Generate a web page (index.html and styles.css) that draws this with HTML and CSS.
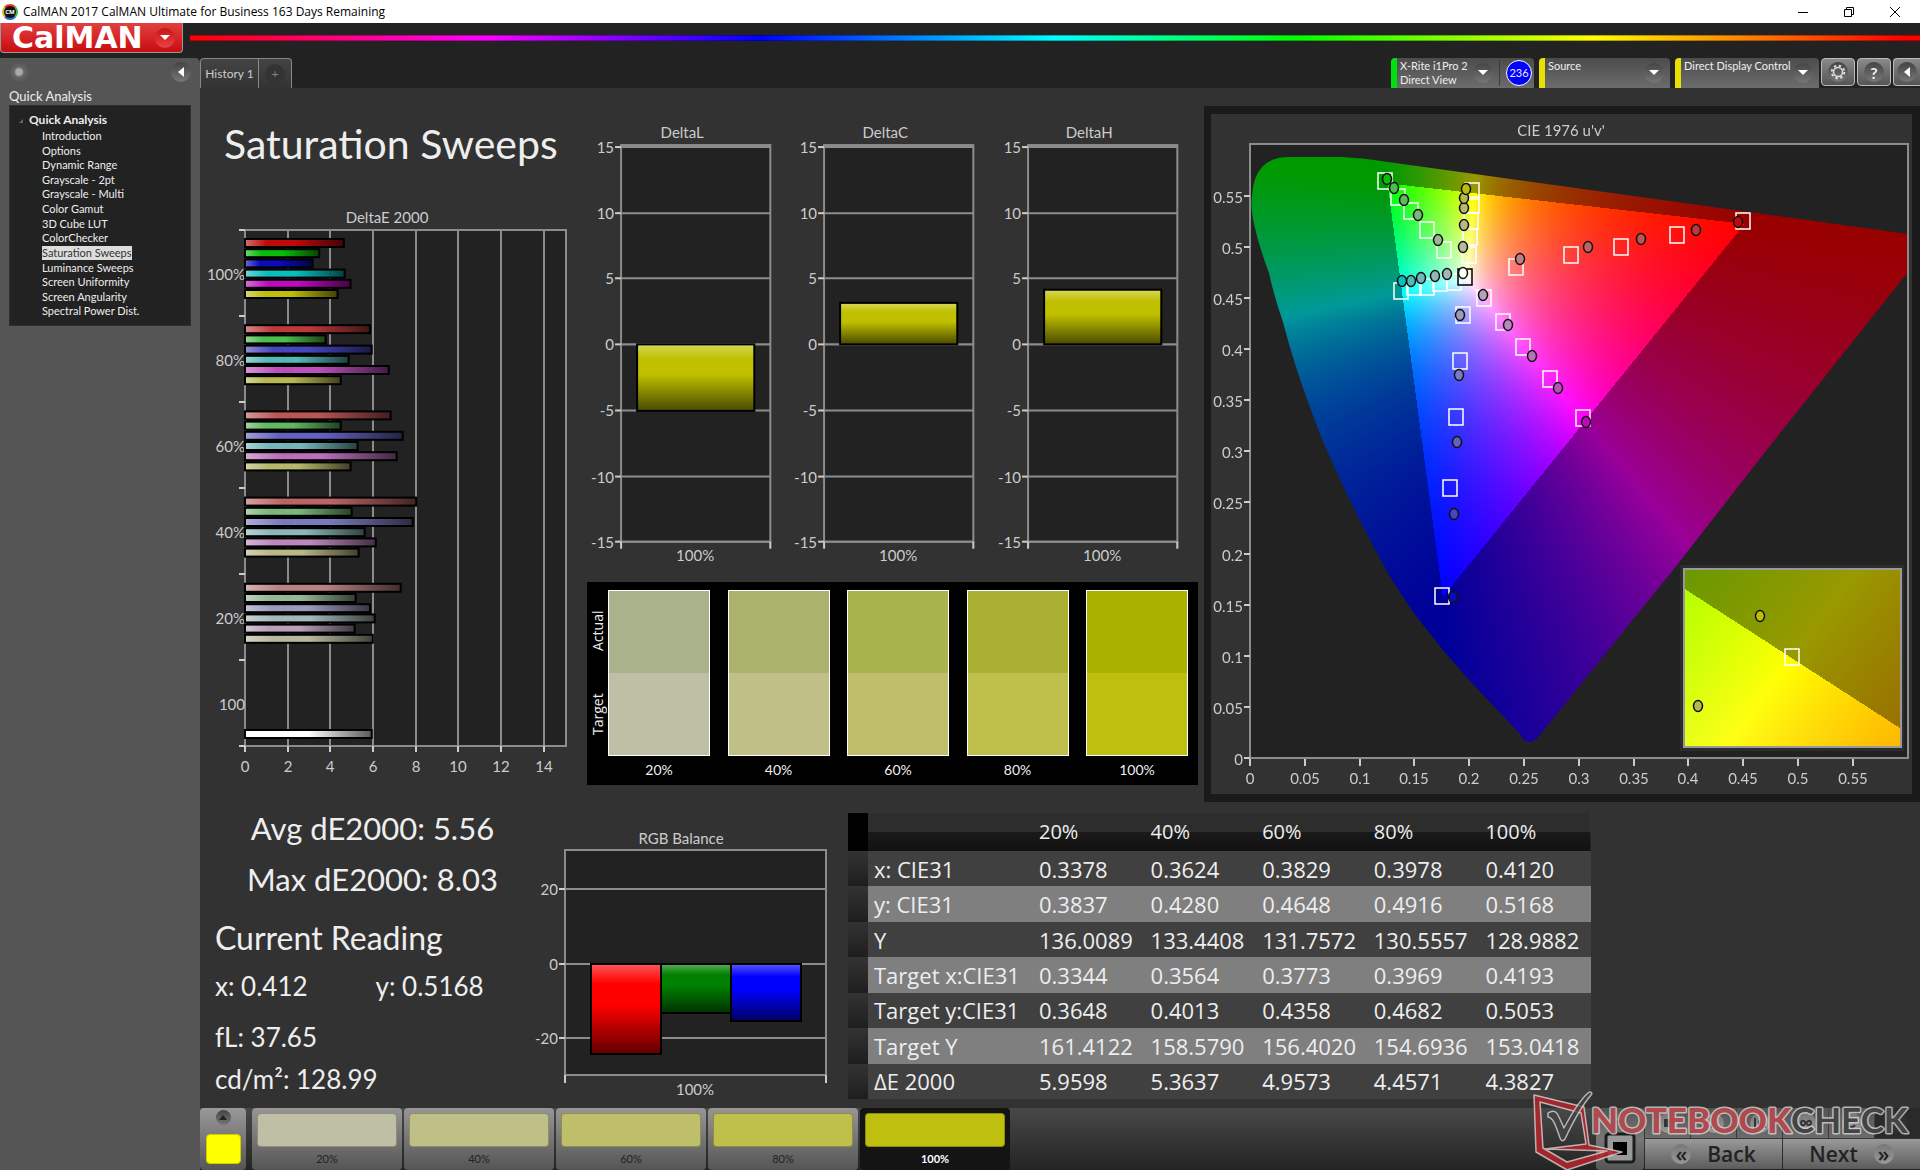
FILE: index.html
```html
<!DOCTYPE html>
<html lang="en">
<head>
    <meta charset="UTF-8">
    <meta name="viewport" content="width=device-width, initial-scale=1.0">
    <title>CalMAN 2017 CalMAN Ultimate for Business 163 Days Remaining</title>
    <link rel="stylesheet" href="styles.css">
</head>
<body>
    <svg class="defs" width="0" height="0" aria-hidden="true">
        <defs>
            <linearGradient id="gloss-h" x1="0" y1="0" x2="1" y2="0">
                <stop offset="0" stop-color="#fff" stop-opacity=".4"/>
                <stop offset=".22" stop-color="#fff" stop-opacity="0"/>
                <stop offset=".5" stop-color="#000" stop-opacity="0"/>
                <stop offset="1" stop-color="#000" stop-opacity=".65"/>
            </linearGradient>
            <linearGradient id="gloss-v" x1="0" y1="0" x2="0" y2="1">
                <stop offset="0" stop-color="#fff" stop-opacity=".35"/>
                <stop offset=".22" stop-color="#fff" stop-opacity="0"/>
                <stop offset=".45" stop-color="#000" stop-opacity="0"/>
                <stop offset="1" stop-color="#000" stop-opacity=".62"/>
            </linearGradient>
        </defs>
    </svg>

    <div class="titlebar">
        <span class="app-icon">CM</span>
        <span class="app-title">CalMAN 2017 CalMAN Ultimate for Business 163 Days Remaining</span>
        <div class="window-buttons">
            <button aria-label="Minimize"><svg width="12" height="12"><path d="M1 6.5h10" stroke="#000"/></svg></button>
            <button aria-label="Restore"><svg width="12" height="12" fill="none" stroke="#000"><path d="M1.500 3.500h7v7h-7zM3.500 3V1.500h7v7H9"/></svg></button>
            <button aria-label="Close"><svg width="12" height="12" stroke="#000"><path d="M1 1l10 10M11 1L1 11"/></svg></button>
        </div>
    </div>

    <header class="brand">
        <button class="logo">CalMAN
            <span class="round logo-arrow"><svg width="10" height="6"><path d="M0 0h10L5 5z" fill="#fff"/></svg></span>
        </button>
        <div class="rainbow"></div>
    </header>

    <div class="layout">
        <aside class="sidebar">
            <div class="sidebar-top">
                <span class="round pin"></span>
                <button class="round" aria-label="Collapse"><svg width="6" height="10"><path d="M6 0v10L0 5z" fill="#fff"/></svg></button>
            </div>
            <h2>Quick Analysis</h2>
            <nav class="tree">
                <h3>Quick Analysis</h3>
                <ul>
                    <li><a href="#">Introduction</a></li>
                    <li><a href="#">Options</a></li>
                    <li><a href="#">Dynamic Range</a></li>
                    <li><a href="#">Grayscale - 2pt</a></li>
                    <li><a href="#">Grayscale - Multi</a></li>
                    <li><a href="#">Color Gamut</a></li>
                    <li><a href="#">3D Cube LUT</a></li>
                    <li><a href="#">ColorChecker</a></li>
                    <li><a href="#" class="current">Saturation Sweeps</a></li>
                    <li><a href="#">Luminance Sweeps</a></li>
                    <li><a href="#">Screen Uniformity</a></li>
                    <li><a href="#">Screen Angularity</a></li>
                    <li><a href="#">Spectral Power Dist.</a></li>
                </ul>
            </nav>
        </aside>

        <div class="content">
            <div class="toolbar">
                <div class="tabs">
                    <button class="tab">History 1</button>
                    <button class="tab tab-add" aria-label="Add"><span class="round">+</span></button>
                </div>
                <div class="devices">
                    <button class="device meter">
                        <span>X-Rite i1Pro 2<br>Direct View</span>
                        <span class="round"><svg width="10" height="6"><path d="M0 0h10L5 5z" fill="#fff"/></svg></span>
                        <span class="reading-count"><span class="count">236</span></span>
                    </button>
                    <div class="device source">
                        <select aria-label="Source"><option>Source</option></select>
                        <span class="round"><svg width="10" height="6"><path d="M0 0h10L5 5z" fill="#fff"/></svg></span>
                    </div>
                    <div class="device display">
                        <select aria-label="Display control"><option>Direct Display Control</option></select>
                        <span class="round"><svg width="10" height="6"><path d="M0 0h10L5 5z" fill="#fff"/></svg></span>
                    </div>
                    <button class="tool" aria-label="Settings"><span class="round">
                        <svg width="16" height="16" viewBox="0 0 16 16" fill="none" stroke="#ddd"><circle cx="8" cy="8" r="4.500" stroke-width="1.500"/><circle cx="8" cy="8" r="6.300" stroke-width="2" stroke-dasharray="2.400 2.548"/></svg>
                    </span></button>
                    <button class="tool" aria-label="Help"><span class="round">?</span></button>
                    <button class="tool tool-last" aria-label="Hide"><span class="round"><svg width="6" height="10"><path d="M6 0v10L0 5z" fill="#fff"/></svg></span></button>
                </div>
            </div>

            <main>
                <section class="row-top">
                    <div class="col-left">
                        <h1>Saturation Sweeps</h1>
                        <svg class="chart" id="delta-e" viewBox="0 0 375 590"></svg>
                    </div>
                    <div class="col-middle">
                        <div class="deltas">
                            <svg class="chart" id="delta-l" viewBox="0 0 203 470"></svg>
                            <svg class="chart" id="delta-c" viewBox="0 0 203 470"></svg>
                            <svg class="chart" id="delta-h" viewBox="0 0 203 470"></svg>
                        </div>
                        <div class="compare">
                            <div class="compare-side"><span>Actual</span><span>Target</span></div>
                            <div class="swatches">
                                <figure class="s20"><div></div><figcaption>20%</figcaption></figure>
                                <figure class="s40"><div></div><figcaption>40%</figcaption></figure>
                                <figure class="s60"><div></div><figcaption>60%</figcaption></figure>
                                <figure class="s80"><div></div><figcaption>80%</figcaption></figure>
                                <figure class="s100"><div></div><figcaption>100%</figcaption></figure>
                            </div>
                        </div>
                    </div>
                    <div class="cie">
                        <svg class="chart" id="cie" viewBox="0 0 701 680">
                            <rect class="plot" x="39" y="30" width="658" height="614"/>
                            <foreignObject x="39" y="30" width="658" height="614"><canvas id="cie-canvas" width="658" height="614"></canvas></foreignObject>
                            <g id="cie-axes"></g>
                            <g id="cie-points"></g>
                            <rect x="469" y="451" width="224" height="186" fill="#2c2c2c"/>
                            <foreignObject x="473" y="455" width="217" height="178"><canvas id="zoom-canvas" width="217" height="178"></canvas></foreignObject>
                            <rect x="473" y="455" width="217" height="178" fill="none" stroke="#999" stroke-width="2"/>
                            <ellipse class="actual" cx="549" cy="502" rx="4.500" ry="5.500" fill="#bebe0a"/>
                            <ellipse class="actual" cx="487" cy="592" rx="4.500" ry="5.500" fill="#b8b850"/>
                            <rect class="target" x="574" y="535" width="14" height="16"/>
                        </svg>
                    </div>
                </section>

                <section class="row-bottom">
                    <div class="readings">
                        <div class="stats">
                            <p>Avg dE2000: 5.56</p>
                            <p>Max dE2000: 8.03</p>
                        </div>
                        <h2>Current Reading</h2>
                        <div class="xy"><span>x: 0.412</span><span>y: 0.5168</span></div>
                        <p class="fl">fL: 37.65</p>
                        <p>cd/m²: 128.99</p>
                    </div>
                    <svg class="chart" id="rgb" viewBox="0 0 318 280"></svg>
                    <table>
                        <thead>
                            <tr><td class="handle"></td><th class="name"></th><th>20%</th><th>40%</th><th>60%</th><th>80%</th><th>100%</th></tr>
                        </thead>
                        <tbody>
                            <tr><td class="handle"></td><th>x: CIE31</th><td>0.3378</td><td>0.3624</td><td>0.3829</td><td>0.3978</td><td>0.4120</td></tr>
                            <tr><td class="handle"></td><th>y: CIE31</th><td>0.3837</td><td>0.4280</td><td>0.4648</td><td>0.4916</td><td>0.5168</td></tr>
                            <tr><td class="handle"></td><th>Y</th><td>136.0089</td><td>133.4408</td><td>131.7572</td><td>130.5557</td><td>128.9882</td></tr>
                            <tr><td class="handle"></td><th>Target x:CIE31</th><td>0.3344</td><td>0.3564</td><td>0.3773</td><td>0.3969</td><td>0.4193</td></tr>
                            <tr><td class="handle"></td><th>Target y:CIE31</th><td>0.3648</td><td>0.4013</td><td>0.4358</td><td>0.4682</td><td>0.5053</td></tr>
                            <tr><td class="handle"></td><th>Target Y</th><td>161.4122</td><td>158.5790</td><td>156.4020</td><td>154.6936</td><td>153.0418</td></tr>
                            <tr><td class="handle"></td><th>ΔE 2000</th><td>5.9598</td><td>5.3637</td><td>4.9573</td><td>4.4571</td><td>4.3827</td></tr>
                        </tbody>
                    </table>
                </section>
            </main>

            <footer class="bottombar">
                <button class="current-color" aria-label="Current color">
                    <span class="round"><svg width="8" height="5"><path d="M0 5h8L4 0z" fill="#222"/></svg></span>
                    <span class="chip"></span>
                </button>
                <div class="levels">
                    <button class="level s20"><span></span>20%</button>
                    <button class="level s40"><span></span>40%</button>
                    <button class="level s60"><span></span>60%</button>
                    <button class="level s80"><span></span>80%</button>
                    <button class="level s100 selected"><span></span>100%</button>
                </div>
                <div class="transport">
                    <button class="stop" aria-label="Stop"><svg width="32" height="54" viewBox="0 0 32 54"><path d="M11 11l5-5 5 5z" fill="#444"/><rect x="2" y="22" width="28" height="28" rx="3" fill="#999" stroke="#1c1c1c" stroke-width="3"/><rect x="9" y="30" width="14" height="13"/></svg></button>
                    <div class="keys">
                        <button aria-label="Read"><span class="round"><svg width="10" height="10"><path d="M1 1h8v8H1z" fill="#333"/></svg></span></button>
                        <button aria-label="Play"><span class="round"><svg width="10" height="10"><path d="M2 0l7 5-7 5z" fill="#333"/></svg></span></button>
                        <button aria-label="Play all"><span class="round"><svg width="12" height="10" fill="#333"><path d="M0 0h2v10H0zM10 0h2v10h-2zM4 2l5 3-5 3z"/></svg></span></button>
                        <button aria-label="Loop"><span class="round"><svg width="12" height="10" fill="none" stroke="#333" stroke-width="2"><path d="M6 5C3 1 1 3 1 5s2 4 5 0 5-2 5 0-2 4-5 0"/></svg></span></button>
                        <button aria-label="Refresh"><span class="round"><svg width="12" height="12" fill="none" stroke="#333" stroke-width="2"><path d="M10 4a4 4 0 0 0-7 0M2 8a4 4 0 0 0 7 0"/></svg></span></button>
                        <button class="off" aria-label="More" disabled><span class="round"></span></button>
                        <button class="wide"><span class="round">«</span>Back</button>
                        <button class="wide">Next<span class="round">»</span></button>
                    </div>
                </div>
                <svg class="watermark" width="390" height="84" viewBox="0 0 390 84">
                    <g stroke="#ddd" stroke-opacity=".75" stroke-linejoin="round">
                        <path fill="#b5262c" fill-opacity=".85" fill-rule="evenodd" stroke-width="1.500" d="M4 9l50 12 5 38 33 7-55 18L6 66zM10 16l3 46 24 14 40-11-62-2 41-5-5-31z"/>
                        <path fill="#444" fill-opacity=".8" stroke-width="1.500" d="M18 27c6-4 9-1 11 4l5 11C42 27 50 14 58 7c3-2 5 0 3 2C50 22 42 38 35 53c-2 3-4 2-5-1-4-11-6-20-12-21z"/>
                        <text x="61" y="47" class="mark-bold">NOTEBOOK</text>
                        <text x="261" y="47" class="mark-thin">CHECK</text>
                    </g>
                </svg>
            </footer>
        </div>
    </div>
    <script src="script.js"></script>
</body>
</html>
```
FILE: styles.css
```css
* {
    box-sizing: border-box;
}
body {
    margin: 0;
    min-height: 100vh;
    display: flex;
    flex-direction: column;
    background: #222;
    color: #eee;
    font-family: Lato, "Liberation Sans", sans-serif;
    font-size: 12px;
}
button, select {
    margin: 0;
    padding: 0;
    border: 0;
    background: none;
    color: inherit;
    font: inherit;
}
h1, h2, h3, p, ul, figure {
    margin: 0;
    padding: 0;
    font-weight: normal;
}
.defs {
    position: absolute;
}
.round {
    display: flex;
    flex: none;
    align-items: center;
    justify-content: center;
    width: 20px;
    height: 20px;
    border-radius: 50%;
    background: linear-gradient(#444, #777);
}

/* window title */
.titlebar {
    display: flex;
    align-items: center;
    height: 23px;
    padding-left: 2px;
    background: #fff;
    color: #000;
    font-family: "Noto Sans", "Open Sans", sans-serif;
}
.app-title {
    font-family: "Open Sans", sans-serif;
}
.app-icon {
    width: 16px;
    height: 16px;
    margin-right: 5px;
    border: 2px solid #3a6;
    border-color: #e33 #3b5 #26d #db2;
    border-radius: 50%;
    background: #111;
    color: #fff;
    font-size: 6px;
    font-weight: bold;
    line-height: 12px;
    text-align: center;
}
.window-buttons {
    display: flex;
    margin-left: auto;
    padding-right: 2px;
}
.window-buttons button {
    width: 46px;
    height: 20px;
}
.window-buttons svg {
    display: block;
    margin: 0 auto;
}

/* logo and spectrum */
.brand {
    display: flex;
    height: 35px;
    gap: 7px;
}
.logo {
    display: flex;
    align-items: center;
    justify-content: space-between;
    width: 183px;
    height: 30px;
    padding: 0 7px 0 11px;
    border: 1px solid #999;
    border-width: 0 1px 1px;
    border-radius: 0 0 4px 4px;
    background: linear-gradient(#e24040, #c80c10);
    color: #fff;
    font-family: "DejaVu Sans", sans-serif;
    font-size: 30px;
    font-weight: bold;
    line-height: 30px;
}
.logo-arrow {
    background: linear-gradient(#c81414, #e84444);
}
.rainbow {
    flex: 1;
    height: 6px;
    margin-top: 12px;
    background: linear-gradient(90deg, #f00, #f0f 17%, #00f 33%, #0ff 50%, #0f0 64%, #ff0 81%, #f00 99%);
    border: 1px solid rgba(0, 0, 0, .3);
    border-width: 1px 0;
}

.layout {
    flex: 1;
    display: flex;
}

/* sidebar */
.sidebar {
    width: 200px;
    padding: 4px 9px;
    background: #555;
    border-radius: 0 5px 0 0;
}
.sidebar-top {
    display: flex;
    justify-content: space-between;
}
.pin {
    background: radial-gradient(circle, #aaa 3px, #666 5px, #4a4a4a);
}
.sidebar h2 {
    margin-top: 6px;
    font-size: 13px;
    line-height: 17px;
}
.tree {
    height: 221px;
    padding: 7px 0 7px 19px;
    background: #222;
    border: 1px solid #2e2e2e;
    position: relative;
}
.tree::before {
    content: "";
    position: absolute;
    left: 9px;
    top: 13px;
    border: 2px solid transparent;
    border-right-color: #666;
    border-bottom-color: #666;
}
.tree h3 {
    font-size: 12px;
    line-height: 14px;
    font-weight: bold;
}
.tree ul {
    display: grid;
    grid-auto-rows: 1fr;
    height: 190px;
    margin: 2px 0 0 13px;
    list-style: none;
}
.tree li {
    font-size: 11px;
    line-height: 14px;
}
.tree a {
    display: inline-block;
    color: inherit;
    text-decoration: none;
}
.tree .current {
    background: #ddd;
    color: #333;
}

/* toolbar */
.content {
    flex: 1;
    display: flex;
    flex-direction: column;
    min-width: 0;
}
.toolbar {
    display: flex;
    justify-content: space-between;
    height: 30px;
}
.tabs {
    display: flex;
}
.tab {
    width: 59px;
    border: 1px solid #888;
    border-bottom: 0;
    border-radius: 4px 0 0 0;
    background: linear-gradient(#444, #333);
    color: #ccc;
    white-space: nowrap;
}
.tab-add {
    display: flex;
    align-items: center;
    justify-content: center;
    width: 33px;
    border-left: 0;
    border-radius: 0 4px 0 0;
}
.tab-add .round {
    background: #333;
    color: #888;
}
.devices {
    display: flex;
    gap: 2px;
}
.device {
    display: flex;
    align-items: center;
    height: 30px;
    margin-right: 3px;
    padding: 0 6px 0 3px;
    border-left: 6px solid #e8e000;
    border-radius: 4px 4px 0 0;
    background: linear-gradient(#4c4c4c, #6c6c6c);
    font-size: 11px;
    line-height: 14px;
    text-align: left;
}
.meter {
    width: 143px;
    padding-right: 2px;
    border-left-color: #00e010;
    justify-content: space-between;
    white-space: nowrap;
}
.source {
    width: 131px;
}
.display {
    width: 144px;
    margin-right: 0;
}
.device select {
    flex: 1;
    min-width: 0;
    height: 30px;
    padding-bottom: 14px;
    appearance: none;
}
.reading-count {
    padding-left: 6px;
    border-left: 1px solid #3c3c3c;
}
.count {
    display: block;
    width: 26px;
    height: 26px;
    border: 1px solid #fff;
    border-radius: 50%;
    background: #00f;
    line-height: 24px;
    text-align: center;
}
.tool {
    display: flex;
    align-items: center;
    justify-content: center;
    width: 34px;
    height: 28px;
    border: 1px solid #bbb;
    border-radius: 4px;
    background: linear-gradient(#8a8a8a, #555);
    font-size: 16px;
    font-weight: bold;
}
.tool-last {
    width: 27px;
    border-right: 0;
    border-radius: 4px 0 0 4px;
}

/* charts */
main {
    flex: 1;
    min-width: 0;
    background: #323232;
}
.row-top {
    display: grid;
    grid-template-columns: 375fr 629fr 716fr;
    align-items: start;
}
.col-left h1 {
    padding: 30px 0 30px 24px;
    font-size: 41px;
    line-height: 52px;
    white-space: nowrap;
}
.chart {
    display: block;
    width: 100%;
    overflow: visible;
}
.chart text {
    fill: #ccc;
    font-size: 15px;
}
.chart canvas {
    display: block;
}
.plot {
    fill: #222;
    stroke: #8c8c8c;
    stroke-width: 2;
}
.tick {
    stroke: #ccc;
    stroke-width: 2;
}
.bar {
    stroke: #000;
    stroke-width: 2;
}
.target {
    fill: none;
    stroke: #fff;
    stroke-width: 1.5;
}
.white-point {
    stroke: #000;
}
.actual {
    stroke: #111;
    stroke-width: 1.5;
}
.deltas {
    display: grid;
    grid-template-columns: 1fr 1fr 1fr;
    padding: 22px 19px 0 0;
}
.compare {
    display: flex;
    gap: 1px;
    height: 203px;
    margin: 1px 6px 0 12px;
    padding: 8px 10px 0 2px;
    background: #000;
}
.compare-side {
    display: flex;
    flex-direction: row-reverse;
    justify-content: space-around;
    width: 18px;
    height: 166px;
    font-family: "Open Sans", sans-serif;
    font-size: 14px;
    line-height: 18px;
    writing-mode: vertical-rl;
    transform: rotate(180deg);
}
.swatches {
    flex: 1;
    display: flex;
    justify-content: space-between;
}
.swatches figure {
    width: 102px;
    text-align: center;
    font-size: 14px;
    line-height: 28px;
}
.swatches figure div {
    height: 166px;
    border: 1px solid #fff;
    background: linear-gradient(var(--actual) 50%, var(--level) 50%);
}
.s20 { --actual: #aab28c; --level: #bfbfa5; }
.s40 { --actual: #abb26c; --level: #c0bf87; }
.s60 { --actual: #a8b34e; --level: #bfbf6b; }
.s80 { --actual: #a9b032; --level: #bfc04c; }
.s100 { --actual: #aab200; --level: #bfbf10; }
.cie {
    margin-top: 18px;
    border: 8px solid #1a1a1a;
    border-left-width: 7px;
}

/* readings and table */
.row-bottom {
    display: grid;
    grid-template-columns: 330fr 318fr 743fr 329fr;
    align-items: start;
    margin-top: 1px;
}
.readings {
    padding-left: 15px;
    font-size: 26px;
    line-height: 42px;
    white-space: nowrap;
}
.stats {
    padding-bottom: 6px;
    font-size: 31px;
    line-height: 51px;
    text-align: center;
}
.readings h2 {
    font-size: 32px;
    line-height: 54px;
}
.xy {
    display: flex;
    gap: 68px;
}
.readings .fl {
    margin-top: 9px;
}
.row-bottom .chart {
    margin-top: 22px;
}
table {
    width: 100%;
    height: 286px;
    margin-top: 10px;
    border-collapse: collapse;
    table-layout: fixed;
    background: #404040;
    font-family: "Open Sans", sans-serif;
    font-size: 22px;
    line-height: 30px;
}
th, td {
    padding: 0 6px;
    text-align: left;
    font-weight: normal;
    white-space: nowrap;
}
thead {
    background: linear-gradient(#2d2d2d 50%, #1a1a1a 50%, #111);
    font-size: 20px;
}
thead tr {
    height: 38px;
}
thead th {
    font-weight: 500;
}
.name {
    width: 165px;
}
.handle {
    width: 20px;
    background: linear-gradient(#333, #1e1e1e);
}
thead .handle {
    background: #000;
}
tbody tr:nth-child(even) {
    background: #7f7f7f;
}

/* bottom bar */
.bottombar {
    position: relative;
    display: flex;
    height: 62px;
    background: linear-gradient(#484848, #242424);
    color: #222;
}
.current-color {
    display: flex;
    flex-direction: column;
    align-items: center;
    justify-content: space-between;
    width: 46px;
    margin-right: 6px;
    padding: 2px 0 6px;
    border-radius: 4px;
    background: linear-gradient(#999, #555);
}
.current-color .round {
    width: 15px;
    height: 15px;
}
.chip {
    width: 35px;
    height: 30px;
    border: 1px solid #cc0;
    border-radius: 4px;
    background: #ff0;
}
.levels {
    display: flex;
    gap: 2px;
}
.level {
    display: flex;
    flex-direction: column;
    align-items: center;
    width: 150px;
    padding: 5px 5px 0;
    border-radius: 4px;
    background: linear-gradient(#969696, #555);
    font-size: 11px;
    line-height: 23px;
}
.level span {
    width: 140px;
    height: 36px;
    border: 1px solid rgba(0, 0, 0, .25);
    border-radius: 4px;
    background: var(--level);
}
.level.selected {
    background: #141414;
    color: #fff;
    font-weight: bold;
}
.transport {
    display: flex;
    gap: 1px;
    margin-left: auto;
}
.stop {
    width: 48px;
    border-radius: 4px;
    background: linear-gradient(#555, #777 50%, #555);
}
.stop svg {
    display: block;
    margin: 0 auto;
}
.keys {
    display: grid;
    grid-template-columns: repeat(6, 45px);
    grid-template-rows: 30px 30px;
    gap: 1px;
}
.keys button {
    display: flex;
    align-items: center;
    justify-content: center;
    background: linear-gradient(#555, #6c6c6c);
}
.keys .round {
    background: linear-gradient(#777, #999);
}
.keys .off {
    background: #2a2a2a;
}
.keys .off .round {
    background: #303030;
}
.keys .wide {
    grid-column: span 3;
    gap: 16px;
    background: linear-gradient(#999, #5c5c5c);
    font-family: "Open Sans", sans-serif;
    font-size: 21px;
    font-weight: 600;
}
.watermark {
    position: absolute;
    right: 0;
    bottom: 0;
}
.watermark text {
    paint-order: stroke;
    stroke-width: 3px;
    font-size: 35px;
}
.mark-bold {
    fill: #b04a4e;
    font-weight: 900;
}
.mark-thin {
    fill: #444;
    font-weight: bold;
}
```
FILE: script.js
```js
// ---- helpers ----
function line(x1, y1, x2, y2, cls) {
    return `<path class="${cls}" d="M${x1} ${y1}L${x2} ${y2}"/>`;
}

function label(x, y, text, anchor) {
    return `<text x="${x}" y="${y}" text-anchor="${anchor}">${text}</text>`;
}

function bar(x, y, w, h, color, gloss) {
    const box = `x="${x}" y="${y}" width="${w}" height="${h}"`;
    return `<rect ${box} fill="${color}"/><rect class="bar" ${box} fill="url(#${gloss})"/>`;
}

// ---- DeltaE 2000 ----
const levels = [
    { name: "100%", values: [4.63, 3.48, 3.17, 4.67, 4.95, 4.34], colors: ["#be0a0a", "#0abe0a", "#0a0abe", "#0abebe", "#be0abe", "#bebe0a"] },
    { name: "80%", values: [5.86, 3.78, 5.94, 4.86, 6.74, 4.49], colors: ["#be3a3a", "#4cbe4c", "#4646be", "#55b8b8", "#be50be", "#b8b850"] },
    { name: "60%", values: [6.83, 4.49, 7.39, 5.28, 7.11, 4.95], colors: ["#bc5555", "#62b862", "#6262be", "#73b8b8", "#bc70bc", "#b8b86c"] },
    { name: "40%", values: [8.03, 5.0, 7.86, 5.61, 6.13, 5.33], colors: ["#bc6464", "#7ab87a", "#7a7abe", "#8cb8b8", "#bc87bc", "#b8b887"] },
    { name: "20%", values: [7.3, 5.19, 5.86, 6.08, 5.14, 5.99], colors: ["#bc8282", "#96b896", "#9b9bbe", "#a5b8b8", "#b8a0b8", "#b8b8a0"] }
];

function drawDeltaE() {
    const left = 45, top = 30, bottom = 546, unit = 21.33, step = 86;
    let out = label(187, 23, "DeltaE 2000", "middle");
    out += `<rect class="plot" x="${left}" y="${top}" width="321" height="${bottom - top}"/>`;
    for (let v = 0; v <= 14; v += 2) {
        const x = Math.round(left + v * unit);
        if (v) out += `<path class="plot" d="M${x} ${top}V${bottom}"/>`;
        out += line(x, bottom, x, bottom + 6, "tick") + label(x, bottom + 26, v, "middle");
    }
    for (let i = 0; i <= 6; i++) out += line(left - 6, top + i * step, left, top + i * step, "tick");
    levels.forEach((level, i) => {
        out += label(left, top + 50 + i * step, level.name, "end");
        level.values.forEach((v, k) => {
            out += bar(left, top + 9 + i * 86.2 + k * 10.2, v * unit, 8, level.colors[k], "gloss-h");
        });
    });
    out += label(left, top + 50 + 5 * step, "100", "end");
    out += bar(left, 530, 5.94 * unit, 8, "#fff", "gloss-h");
    document.getElementById("delta-e").innerHTML = out;
}

// ---- DeltaL / DeltaC / DeltaH ----
function drawDelta(id, title, value) {
    const left = 46, right = 195, zero = 234, unit = 13.15;
    let out = label(107, 28, title, "middle");
    out += `<rect class="plot" x="${left}" y="35" width="${right - left}" height="396"/>`;
    for (let v = 15; v >= -15; v -= 5) {
        const y = Math.round(zero - v * unit);
        out += `<path class="plot" d="M${left} ${y}H${right}"/>`;
        out += line(left - 6, y, left, y, "tick") + label(left - 7, y + 6, v, "end");
    }
    out += line(left, 431, left, 438, "tick") + line(right, 431, right, 438, "tick");
    out += label(120, 450, "100%", "middle");
    out += bar(62, value > 0 ? zero - value * unit : zero, 117, Math.abs(value) * unit, "#c0c000", "gloss-v");
    document.getElementById(id).innerHTML = out;
}

// ---- RGB balance ----
function drawRgb() {
    let out = label(151, 19, "RGB Balance", "middle");
    out += '<rect class="plot" x="35" y="25" width="261" height="225"/>';
    [[20, 64], [0, 139], [-20, 213]].forEach(([v, y]) => {
        out += `<path class="plot" d="M35 ${y}H296"/>` + line(29, y, 35, y, "tick") + label(28, y + 6, v, "end");
    });
    out += line(35, 250, 35, 258, "tick") + line(296, 250, 296, 258, "tick");
    out += label(165, 270, "100%", "middle");
    out += bar(61, 139, 70, 90, "#f00", "gloss-v");
    out += bar(131, 139, 70, 49, "#008000", "gloss-v");
    out += bar(201, 139, 70, 57, "#00f", "gloss-v");
    document.getElementById("rgb").innerHTML = out;
}

// ---- CIE 1976 u'v' ----
// color of a chromaticity, dimmed when it is outside Rec.709
function chromaColor(x, y) {
    const X = x / y, Z = (1 - x - y) / y;
    let rgb = [
        3.2406 * X - 1.5372 - 0.4986 * Z,
        -0.9689 * X + 1.8758 + 0.0415 * Z,
        0.0557 * X - 0.2040 + 1.0570 * Z
    ];
    const outside = Math.min(...rgb) < 0;
    const max = Math.max(...rgb);
    return rgb.map(c => Math.max(c, 0) / max * (outside ? 153 : 255));
}

function paint(canvas, toXy) {
    const ctx = canvas.getContext("2d");
    const w = canvas.width, h = canvas.height;
    const img = ctx.createImageData(w, h);
    for (let j = 0; j < h; j++) {
        for (let i = 0; i < w; i++) {
            const [x, y] = toXy(i, j);
            const c = chromaColor(x, y);
            const p = (j * w + i) * 4;
            img.data[p] = c[0];
            img.data[p + 1] = c[1];
            img.data[p + 2] = c[2];
            img.data[p + 3] = 255;
        }
    }
    ctx.putImageData(img, 0, 0);
    return ctx;
}

function drawCie() {
    const ctx = paint(document.getElementById("cie-canvas"), (i, j) => {
        const u = i / 1096, v = Math.max(614 - j, 1) / 1022.5;
        const d = 6 * u - 16 * v + 12;
        return [9 * u / d, 4 * v / d];
    });
    // keep only the spectral locus
    ctx.globalCompositeOperation = "destination-in";
    ctx.fill(new Path2D("M279 598 Q274 598 270 590 L221 538 Q205 520 193 506 Q177 486 163 468 Q150 448 140 433 Q122 400 108 373 Q88 332 75 302 Q48 236 33 178 Q24 152 19 129 Q9 102 5 84 Q0 64 2 52 Q4 14 37 13 L92 13 Q115 14 138 18 L658 90 L658 128 L523 298 L427 421 L289 592 Q285 598 279 598Z"));

    paint(document.getElementById("zoom-canvas"), (i, j) =>
        [0.4193 + (i - 108) / 4380, 0.5053 - (j - 89) / 3565]);

    let axes = label(350, 22, "CIE 1976 u'v'", "middle");
    axes += '<rect class="plot" style="fill:none" x="39" y="30" width="658" height="614"/>';
    for (let i = 0; i <= 11; i++) {
        const text = String(i * 5 / 100);
        const x = Math.round(39 + i * 54.8), y = Math.round(644 - i * 51.12);
        axes += line(x, 645, x, 652, "tick") + label(x, 670, text, "middle");
        axes += line(33, y, 39, y, "tick") + label(32, y + 7, text, "end");
    }
    document.getElementById("cie-axes").innerHTML = axes;

    // 20% to 100%, order red, green, blue, cyan, magenta, yellow
    const targets = [
        [[305, 153], [360, 141], [410, 133], [466, 121], [532, 107]],
        [[233, 136], [216, 116], [200, 97], [187, 83], [174, 67]],
        [[252, 201], [249, 247], [245, 303], [239, 374], [231, 482]],
        [[243, 168], [229, 169], [216, 173], [203, 173], [190, 177]],
        [[273, 184], [292, 208], [312, 233], [339, 265], [372, 304]],
        [[258, 141], [259, 123], [260, 107], [261, 91], [261, 77]]
    ];
    const actuals = [
        [[309, 145], [377, 133], [430, 125], [485, 116], [527, 108]],
        [[227, 126], [207, 101], [193, 86], [183, 74], [176, 65]],
        [[249, 201], [248, 261], [246, 328], [243, 400], [242, 483]],
        [[236, 160], [224, 162], [210, 164], [200, 167], [191, 167]],
        [[272, 181], [297, 211], [321, 242], [347, 274], [375, 308]],
        [[252, 133], [253, 111], [253, 94], [253, 84], [255, 75]]
    ];
    // same hue order in the bar colors
    const hues = [0, 1, 2, 3, 4, 5];
    let points = "";
    targets.flat().forEach(([x, y]) => {
        points += `<rect class="target" x="${x - 7}" y="${y - 8}" width="14" height="16"/>`;
    });
    points += '<rect class="target white-point" x="247" y="155" width="14" height="16"/>';
    hues.forEach(hue => actuals[hue].forEach(([x, y], i) => {
        points += `<ellipse class="actual" cx="${x}" cy="${y}" rx="4.5" ry="5.5" fill="${levels[4 - i].colors[hue]}"/>`;
    }));
    points += '<ellipse class="actual" cx="252" cy="159" rx="4.5" ry="5.5" fill="#fff"/>';
    document.getElementById("cie-points").innerHTML = points;
}

drawDeltaE();
drawDelta("delta-l", "DeltaL", -5.05);
drawDelta("delta-c", "DeltaC", 3.15);
drawDelta("delta-h", "DeltaH", 4.15);
drawRgb();
drawCie();
```
